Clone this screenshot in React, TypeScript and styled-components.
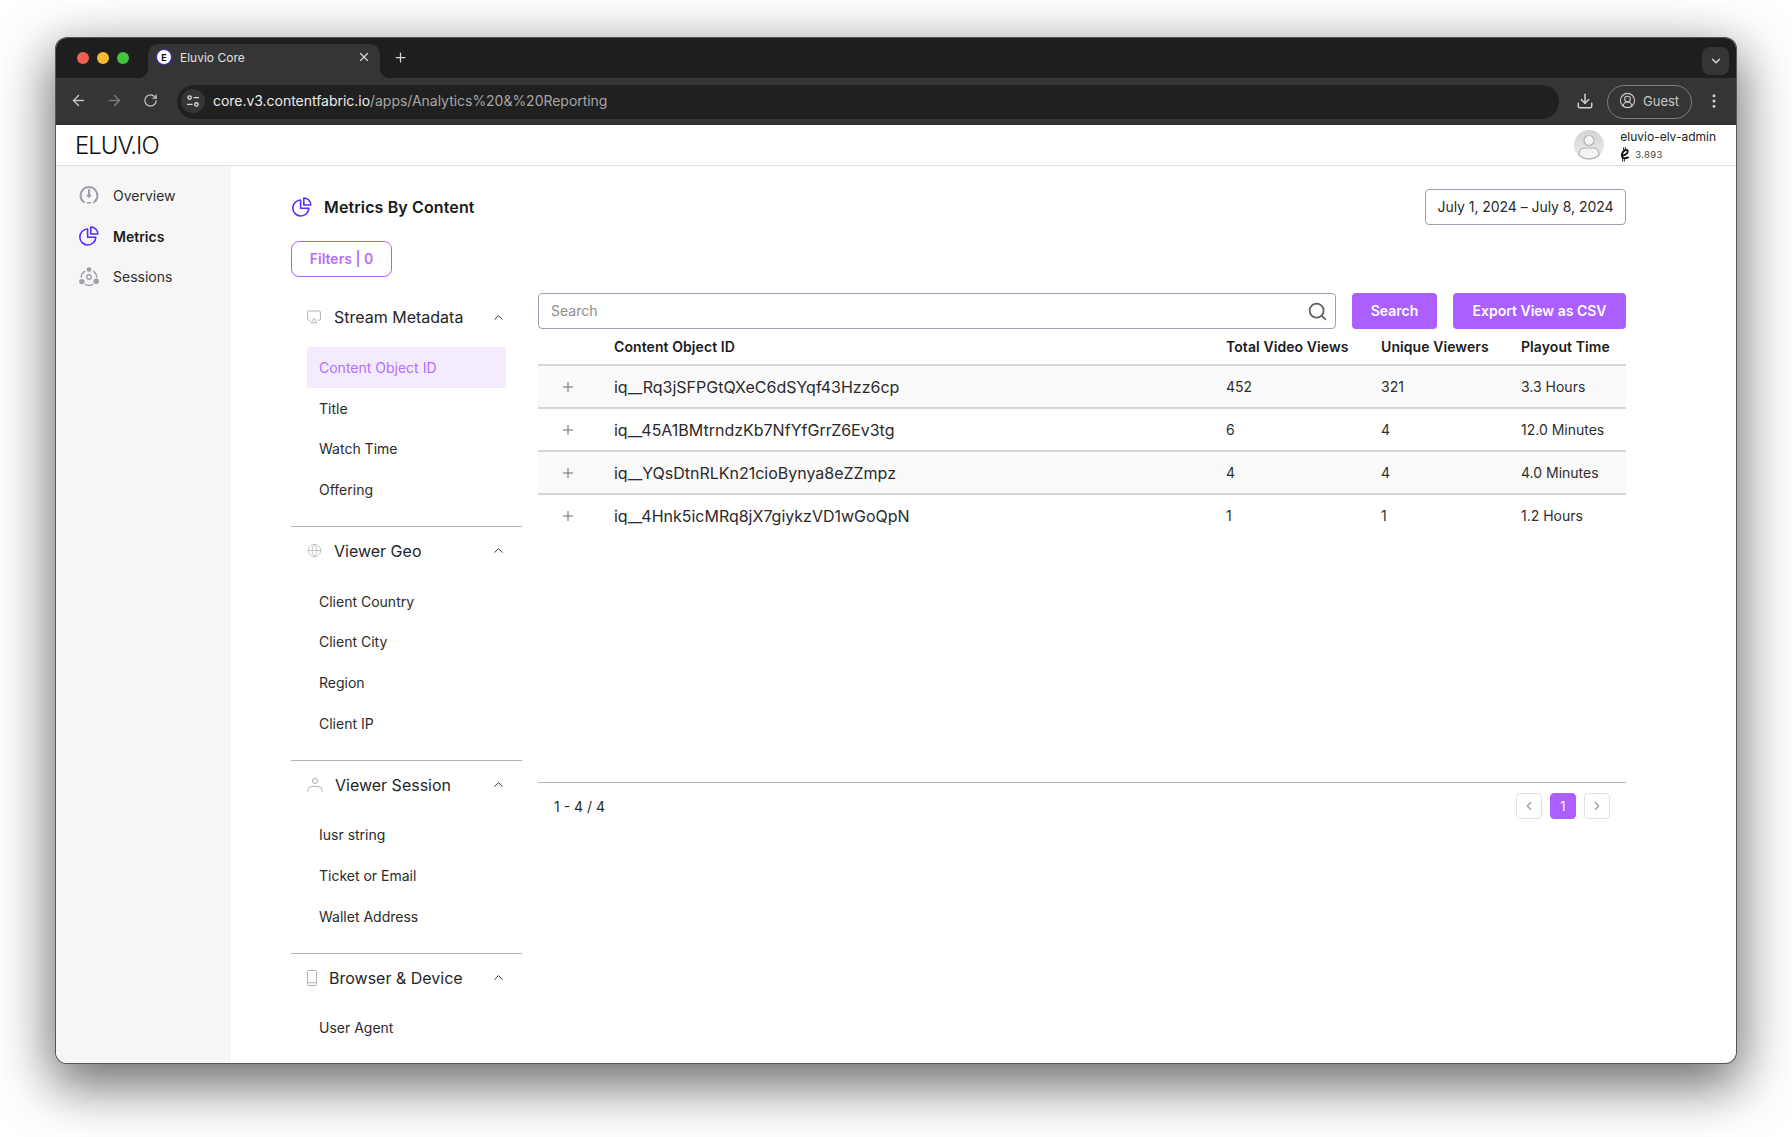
import React from 'react';
import styled, { createGlobalStyle } from 'styled-components';
import {
  ArrowLeft,
  ArrowRight,
  RotateCw,
  Download,
  CircleUserRound,
  EllipsisVertical,
  X,
  Plus,
  ChevronDown,
  ChevronUp,
  ChevronLeft,
  ChevronRight,
  Search,
  Globe,
} from 'lucide-react';

const purple = '#ab5fff';

const GlobalStyle = createGlobalStyle`
  html, body {
    margin: 0;
    padding: 0;
    background: #fff;
  }
  body {
    font-family: Inter, "Liberation Sans", sans-serif;
    color: #1f1f1f;
  }
  * {
    box-sizing: border-box;
  }
`;

const Page = styled.div`
  width: 1792px;
  height: 1137px;
  padding: 38px 56px 74px;
  overflow: hidden;
`;

const Window = styled.div`
  display: flex;
  flex-direction: column;
  height: 1025px;
  border-radius: 11px;
  background: #fff;
  overflow: hidden;
  box-shadow: 0 0 0 1px #555, 0 18px 54px 5px rgba(0, 0, 0, 0.58);
`;

const TitleBar = styled.div`
  display: flex;
  align-items: flex-end;
  height: 40px;
  flex: none;
  background: #1e1e1e;
  padding-left: 21px;
  color: #d6d6d6;
`;

const Lights = styled.div`
  display: flex;
  align-self: center;
  gap: 8px;
  margin-right: 19px;
`;

const Light = styled.span<{ $color: string }>`
  width: 12px;
  height: 12px;
  border-radius: 50%;
  background: ${(p) => p.$color};
`;

const Tab = styled.div`
  position: relative;
  display: flex;
  align-items: center;
  width: 232px;
  height: 34px;
  padding: 0 9px 8px 8px;
  background: #353535;
  border-radius: 10px 10px 0 0;
  font-size: 12px;
  color: #e2e2e2;

  &::before,
  &::after {
    content: '';
    position: absolute;
    bottom: 0;
    width: 10px;
    height: 10px;
  }
  &::before {
    left: -10px;
    background: radial-gradient(circle at 0 0, #1e1e1e 10px, #353535 10.5px);
  }
  &::after {
    right: -10px;
    background: radial-gradient(circle at 100% 0, #1e1e1e 10px, #353535 10.5px);
  }
`;

const Favicon = styled.span`
  display: flex;
  align-items: center;
  justify-content: center;
  width: 16px;
  height: 16px;
  margin-right: 8px;
  border-radius: 50%;
  background: #fff;
  border: 1.5px solid #4a1de0;
  color: #111;
  font-size: 9px;
  font-weight: 700;
`;

const TabTitle = styled.span`
  flex: 1;
`;

const NewTab = styled.span`
  display: flex;
  align-self: center;
  margin-left: 13px;
  margin-top: -1px;
  color: #d6d6d6;
`;

const TabMenu = styled.span`
  display: flex;
  align-items: center;
  justify-content: center;
  align-self: center;
  width: 27px;
  height: 28px;
  margin-left: auto;
  margin-right: 7px;
  margin-top: 6px;
  border-radius: 8px;
  background: #353535;
  color: #dcdcdc;
`;

const Toolbar = styled.div`
  display: flex;
  align-items: center;
  height: 47px;
  flex: none;
  background: #353535;
  color: #c4c4c4;
  padding: 0 0 2px 14px;
`;

const NavButton = styled.span<{ $dim?: boolean; $width: number }>`
  display: flex;
  width: ${(p) => p.$width}px;
  color: ${(p) => (p.$dim ? '#7a7a7a' : '#c4c4c4')};
`;

const UrlBar = styled.div`
  display: flex;
  align-items: center;
  width: 1382px;
  height: 34px;
  margin-left: -2px;
  margin-top: 2px;
  padding: 0 0 2px 4px;
  border-radius: 17px;
  background: #202020;
  font-size: 14px;
  letter-spacing: -0.03px;
  color: #a6a6a6;
`;

const SiteInfo = styled.span`
  display: flex;
  align-items: center;
  justify-content: center;
  width: 24px;
  height: 24px;
  margin-right: 8px;
  border-radius: 50%;
  background: #353535;
  color: #d8d8d8;
`;

const Host = styled.span`
  color: #ececec;
`;

const ToolbarIcon = styled.span`
  display: flex;
  margin-left: 17px;
  color: #d0d0d0;
`;

const GuestPill = styled.div`
  display: flex;
  align-items: center;
  gap: 7px;
  width: 85px;
  height: 34px;
  margin-left: 13px;
  margin-top: 2px;
  padding: 0 0 2px 11px;
  border: 1px solid #7c7c7c;
  border-radius: 17px;
  font-size: 13px;
  color: #c8c8c8;
`;

const MoreIcon = styled.span`
  display: flex;
  margin-left: 13px;
  color: #d0d0d0;
`;

const AppHeader = styled.header`
  display: flex;
  align-items: center;
  height: 41px;
  flex: none;
  padding: 0 20px 0 19px;
  border-bottom: 1px solid #e2e2e2;
`;

const Logo = styled.div`
  font-size: 24px;
  font-weight: 300;
  letter-spacing: -1px;
  color: #111;
`;

const Profile = styled.div`
  display: flex;
  align-items: center;
  margin-left: auto;
  gap: 16px;
`;

const UserInfo = styled.div`
  display: flex;
  flex-direction: column;
  gap: 3px;
  padding-top: 2px;
`;

const UserName = styled.div`
  font-size: 12px;
  line-height: 14px;
  color: #222;
`;

const Balance = styled.div`
  display: flex;
  align-items: center;
  gap: 5px;
  font-size: 9.5px;
  line-height: 12px;
  color: #444;
  letter-spacing: 0.3px;
`;

const Body = styled.div`
  display: flex;
  flex: 1;
  min-height: 0;
`;

const Sidebar = styled.nav`
  display: flex;
  flex-direction: column;
  width: 175px;
  flex: none;
  padding-top: 9px;
  background: #f6f6f6;
`;

const NavItem = styled.div<{ $active?: boolean }>`
  display: flex;
  align-items: center;
  gap: 14px;
  height: 40.7px;
  padding-left: 23px;
  font-size: 14px;
  font-weight: ${(p) => (p.$active ? 600 : 400)};
  color: ${(p) => (p.$active ? '#1a1a1a' : '#2e2e2e')};
`;

const Main = styled.main`
  flex: 1;
  min-width: 0;
  padding: 23px 110px 0 60px;
  overflow: hidden;
`;

const TitleRow = styled.div`
  display: flex;
  align-items: center;
  justify-content: space-between;
  height: 36px;
`;

const PageTitle = styled.h1`
  display: flex;
  align-items: center;
  gap: 12px;
  margin: 0 0 0 1px;
  font-size: 16px;
  font-weight: 600;
  letter-spacing: 0.12px;
  color: #1a1a1a;
`;

const DateButton = styled.button`
  width: 201px;
  height: 36px;
  padding: 0 0 2px;
  border: 1px solid #a39bb0;
  border-radius: 4px;
  background: #fff;
  font-family: inherit;
  font-size: 14px;
  letter-spacing: -0.05px;
  color: #2a2a2a;
`;

const FiltersButton = styled.button`
  display: block;
  width: 101px;
  height: 36px;
  margin-top: 16px;
  padding: 0 0 2px;
  border: 1px solid ${purple};
  border-radius: 8px;
  background: #fff;
  font-family: inherit;
  font-size: 14px;
  font-weight: 600;
  color: #b56dff;
`;

const Columns = styled.div`
  display: flex;
  gap: 16px;
  margin-top: 16px;
`;

const FilterPanel = styled.div`
  width: 231px;
  flex: none;
`;

const FilterSection = styled.section`
  padding-bottom: 16px;
  border-bottom: 1px solid #b4b4b4;

  &:last-child {
    border-bottom: none;
  }
`;

const SectionHeader = styled.div<{ $gap: number }>`
  display: flex;
  align-items: center;
  height: 48px;
  margin-bottom: 6px;
  padding: 0 16px;
  gap: ${(p) => p.$gap}px;
  font-size: 16px;
  color: #262626;
`;

const SectionCaret = styled.span`
  display: flex;
  margin-left: auto;
  color: #333;
`;

const FilterItem = styled.div<{ $active?: boolean }>`
  display: flex;
  align-items: center;
  height: 40.7px;
  margin: 0 16px;
  padding-left: 12px;
  font-size: 14px;
  color: ${(p) => (p.$active ? '#b56dff' : '#2b2b2b')};
  background: ${(p) => (p.$active ? '#f4ecfe' : 'transparent')};
`;

const Results = styled.div`
  flex: 1;
  min-width: 0;
`;

const SearchRow = styled.div`
  display: flex;
  gap: 16px;
`;

const SearchBox = styled.div`
  display: flex;
  align-items: center;
  justify-content: space-between;
  flex: 1;
  height: 36px;
  padding: 0 7px 2px 12px;
  border: 1px solid #a39bb0;
  border-radius: 4px;
  font-size: 14px;
  color: #8d8d8d;
`;

const SearchIcon = styled.span`
  display: flex;
  margin-top: 2px;
  color: #5f5f66;
`;

const PrimaryButton = styled.button<{ $width: number }>`
  width: ${(p) => p.$width}px;
  height: 36px;
  padding: 0 0 2px;
  border: none;
  border-radius: 4px;
  background: ${purple};
  font-family: inherit;
  font-size: 14px;
  font-weight: 600;
  color: #fff;
`;

const TableArea = styled.div`
  height: 453px;
`;

const HeaderRow = styled.div`
  display: grid;
  grid-template-columns: 76px 612px 155px 140px 1fr;
  align-items: center;
  height: 37px;
  border-bottom: 2px solid #d6d6d6;
  font-size: 14px;
  font-weight: 600;
  letter-spacing: 0.08px;
  color: #1c1c1c;
  white-space: nowrap;
`;

const Row = styled.div<{ $striped: boolean; $last: boolean }>`
  display: grid;
  grid-template-columns: 76px 612px 155px 140px 1fr;
  align-items: center;
  height: 43px;
  border-bottom: 2px solid ${(p) => (p.$last ? 'transparent' : '#d6d6d6')};
  background: ${(p) => (p.$striped ? '#fafafa' : '#fff')};
  font-size: 14px;
  color: #2e2e2e;
`;

const ExpandCell = styled.span`
  display: flex;
  padding-left: 22px;
  color: #6a6a6a;
`;

const IdCell = styled.span`
  font-size: 16px;
  letter-spacing: -0.01px;
  color: #2a2a2a;
`;

const Footer = styled.div`
  display: flex;
  align-items: center;
  justify-content: space-between;
  height: 47px;
  padding: 0 16px;
  border-top: 1px solid #b4b4b4;
  font-size: 14px;
  color: #2a2a2a;
`;

const Pager = styled.div`
  display: flex;
  gap: 8px;
`;

const PageButton = styled.span<{ $current?: boolean }>`
  display: flex;
  align-items: center;
  justify-content: center;
  width: 26px;
  height: 26px;
  border-radius: 4px;
  border: 1px solid ${(p) => (p.$current ? purple : '#e2e2e2')};
  background: ${(p) => (p.$current ? purple : '#fff')};
  color: ${(p) => (p.$current ? '#fff' : '#9a9a9a')};
  font-size: 13px;
  font-weight: 400;
`;

const TuneIcon = () => (
  <svg width="14" height="14" viewBox="0 0 14 14" fill="none" stroke="currentColor" strokeWidth="1.4">
    <circle cx="3.6" cy="3.6" r="1.7" />
    <path d="M7.5 3.6h5.5M1 10.4h5.5" />
    <circle cx="10.4" cy="10.4" r="1.7" />
  </svg>
);

const OverviewIcon = () => (
  <svg width="20" height="20" viewBox="0 0 20 20" fill="none" stroke="#a29dac" strokeWidth="2" strokeLinecap="round">
    <path d="M5 17.2A8.4 8.4 0 1 1 15 17.2" />
    <path d="M10 5v6.4" />
    <path d="M8.4 10.4 10 12l1.6-1.6" strokeWidth="1.5" />
    <path d="M8.4 17.8h3.2" strokeWidth="1.4" />
  </svg>
);

const PieIcon = () => (
  <svg width="20" height="20" viewBox="0 0 20 20" fill="none" stroke="#5a2bff" strokeWidth="1.6" strokeLinejoin="round">
    <path d="M8.6 3a8 8 0 1 0 8.2 8.2H8.6V3Z" />
    <path d="M11.8 1a7 7 0 0 1 7 7h-7V1Z" />
  </svg>
);

const SessionsIcon = () => (
  <svg width="20" height="20" viewBox="0 0 20 20" fill="none" stroke="#a29dac" strokeWidth="1.4">
    <path d="M6 4.2A7.8 7.8 0 0 0 2.2 10.8M14 4.2A7.8 7.8 0 0 1 17.8 10.8M5.6 17a7.8 7.8 0 0 0 8.8 0" />
    <circle cx="10" cy="10" r="2.2" />
    <circle cx="10" cy="2.6" r="2.4" fill="#a29dac" stroke="none" />
    <circle cx="2.8" cy="14.6" r="2.7" fill="#a29dac" stroke="none" />
    <circle cx="17.2" cy="14.2" r="2.7" fill="#a29dac" stroke="none" />
  </svg>
);

const ScreenIcon = () => (
  <svg width="14" height="14" viewBox="0 0 14 14" fill="none" stroke="#b4b4b4" strokeWidth="1">
    <path d="M3.4 10.2H1.6a1 1 0 0 1-1-1V2a1 1 0 0 1 1-1h10.8a1 1 0 0 1 1 1v7.2a1 1 0 0 1-1 1h-1.8" />
    <path d="M7 8.4 10 12.8H4L7 8.4Z" />
  </svg>
);

const PersonIcon = () => (
  <svg width="16" height="16" viewBox="0 0 16 16" fill="none" stroke="#b4b4b4" strokeWidth="1">
    <circle cx="8" cy="4" r="2.6" />
    <path d="M1 15v-1.6a4 4 0 0 1 4-4h6a4 4 0 0 1 4 4V15" />
  </svg>
);

const PhoneIcon = () => (
  <svg width="10" height="16" viewBox="0 0 10 16" fill="none" stroke="#b4b4b4" strokeWidth="1">
    <rect x="0.5" y="0.5" width="9" height="15" rx="1.2" />
    <path d="M0.5 12.8h9" />
  </svg>
);

const AvatarIcon = () => (
  <svg width="30" height="30" viewBox="0 0 30 30">
    <defs>
      <linearGradient id="avatarFill" x1="0" y1="0" x2="0" y2="1">
        <stop offset="0" stopColor="#d4d4d4" />
        <stop offset="1" stopColor="#ececec" />
      </linearGradient>
    </defs>
    <circle cx="15" cy="15" r="15" fill="url(#avatarFill)" />
    <circle cx="15" cy="10.5" r="5" fill="#f4f4f4" stroke="#b4b4b4" strokeWidth="1.2" />
    <path d="M5 25c0-5 3-7 6-7h8c3 0 6 2 6 7a15 15 0 0 1-20 0Z" fill="#f4f4f4" stroke="#b4b4b4" strokeWidth="1.2" />
  </svg>
);

const TokenIcon = () => (
  <svg width="10" height="15" viewBox="0 0 10 15" fill="none" stroke="#111" strokeLinecap="round">
    <path d="M2.4 8.6 C6 8 8.6 5.6 7.6 3.6 C6.6 2 3 3.4 2 7 C1.2 10.4 3.8 12.4 8 10.4" strokeWidth="1.9" />
    <path d="M3.6 0.6v2.6M5.4 0.6v2.2M2.6 11.6v2.6M4.4 12v2.2" strokeWidth="0.9" />
  </svg>
);

const sections = [
  {
    name: 'Stream Metadata',
    icon: <ScreenIcon />,
    gap: 13,
    items: ['Content Object ID', 'Title', 'Watch Time', 'Offering'],
  },
  {
    name: 'Viewer Geo',
    icon: <Globe size={15} color="#b4b4b4" strokeWidth={1.2} />,
    gap: 12,
    items: ['Client Country', 'Client City', 'Region', 'Client IP'],
  },
  {
    name: 'Viewer Session',
    icon: <PersonIcon />,
    gap: 12,
    items: ['Iusr string', 'Ticket or Email', 'Wallet Address'],
  },
  {
    name: 'Browser & Device',
    icon: <PhoneIcon />,
    gap: 12,
    items: ['User Agent'],
  },
];

const rows = [
  { id: 'iq__Rq3jSFPGtQXeC6dSYqf43Hzz6cp', views: '452', unique: '321', time: '3.3 Hours' },
  { id: 'iq__45A1BMtrndzKb7NfYfGrrZ6Ev3tg', views: '6', unique: '4', time: '12.0 Minutes' },
  { id: 'iq__YQsDtnRLKn21cioBynya8eZZmpz', views: '4', unique: '4', time: '4.0 Minutes' },
  { id: 'iq__4Hnk5icMRq8jX7giykzVD1wGoQpN', views: '1', unique: '1', time: '1.2 Hours' },
];

const App: React.FC = () => {
  return (
    <Page>
      <GlobalStyle />
      <Window>
        <TitleBar>
          <Lights>
            <Light $color="#f25f52" />
            <Light $color="#f7b932" />
            <Light $color="#46c23f" />
          </Lights>
          <Tab>
            <Favicon>E</Favicon>
            <TabTitle>Eluvio Core</TabTitle>
            <X size={14} color="#d8d8d8" />
          </Tab>
          <NewTab>
            <Plus size={15} />
          </NewTab>
          <TabMenu>
            <ChevronDown size={14} strokeWidth={2.4} />
          </TabMenu>
        </TitleBar>

        <Toolbar>
          <NavButton $width={36}>
            <ArrowLeft size={17} />
          </NavButton>
          <NavButton $dim $width={37}>
            <ArrowRight size={17} />
          </NavButton>
          <NavButton $width={36}>
            <RotateCw size={15} />
          </NavButton>
          <UrlBar>
            <SiteInfo>
              <TuneIcon />
            </SiteInfo>
            <Host>core.v3.contentfabric.io</Host>/apps/Analytics%20&amp;%20Reporting
          </UrlBar>
          <ToolbarIcon>
            <Download size={18} />
          </ToolbarIcon>
          <GuestPill>
            <CircleUserRound size={17} strokeWidth={1.6} />
            Guest
          </GuestPill>
          <MoreIcon>
            <EllipsisVertical size={18} />
          </MoreIcon>
        </Toolbar>

        <AppHeader>
          <Logo>ELUV.IO</Logo>
          <Profile>
            <AvatarIcon />
            <UserInfo>
              <UserName>eluvio-elv-admin</UserName>
              <Balance>
                <TokenIcon />
                3.893
              </Balance>
            </UserInfo>
          </Profile>
        </AppHeader>

        <Body>
          <Sidebar>
            <NavItem>
              <OverviewIcon />
              Overview
            </NavItem>
            <NavItem $active>
              <PieIcon />
              Metrics
            </NavItem>
            <NavItem>
              <SessionsIcon />
              Sessions
            </NavItem>
          </Sidebar>

          <Main>
            <TitleRow>
              <PageTitle>
                <PieIcon />
                Metrics By Content
              </PageTitle>
              <DateButton>July 1, 2024 – July 8, 2024</DateButton>
            </TitleRow>
            <FiltersButton>Filters | 0</FiltersButton>

            <Columns>
              <FilterPanel>
                {sections.map((section) => (
                  <FilterSection key={section.name}>
                    <SectionHeader $gap={section.gap}>
                      {section.icon}
                      {section.name}
                      <SectionCaret>
                        <ChevronUp size={15} strokeWidth={1.6} />
                      </SectionCaret>
                    </SectionHeader>
                    {section.items.map((item) => (
                      <FilterItem key={item} $active={item === 'Content Object ID'}>
                        {item}
                      </FilterItem>
                    ))}
                  </FilterSection>
                ))}
              </FilterPanel>

              <Results>
                <SearchRow>
                  <SearchBox>
                    Search
                    <SearchIcon>
                      <Search size={21} strokeWidth={2} />
                    </SearchIcon>
                  </SearchBox>
                  <PrimaryButton $width={85}>Search</PrimaryButton>
                  <PrimaryButton $width={173}>Export View as CSV</PrimaryButton>
                </SearchRow>

                <TableArea>
                  <HeaderRow>
                    <span />
                    <span>Content Object ID</span>
                    <span>Total Video Views</span>
                    <span>Unique Viewers</span>
                    <span>Playout Time</span>
                  </HeaderRow>
                  {rows.map((row, i) => (
                    <Row key={row.id} $striped={i % 2 === 0} $last={i === rows.length - 1}>
                      <ExpandCell>
                        <Plus size={16} strokeWidth={1.5} />
                      </ExpandCell>
                      <IdCell>{row.id}</IdCell>
                      <span>{row.views}</span>
                      <span>{row.unique}</span>
                      <span>{row.time}</span>
                    </Row>
                  ))}
                </TableArea>

                <Footer>
                  <span>1 - 4 / 4</span>
                  <Pager>
                    <PageButton>
                      <ChevronLeft size={14} />
                    </PageButton>
                    <PageButton $current>1</PageButton>
                    <PageButton>
                      <ChevronRight size={14} />
                    </PageButton>
                  </Pager>
                </Footer>
              </Results>
            </Columns>
          </Main>
        </Body>
      </Window>
    </Page>
  );
};

export default App;
